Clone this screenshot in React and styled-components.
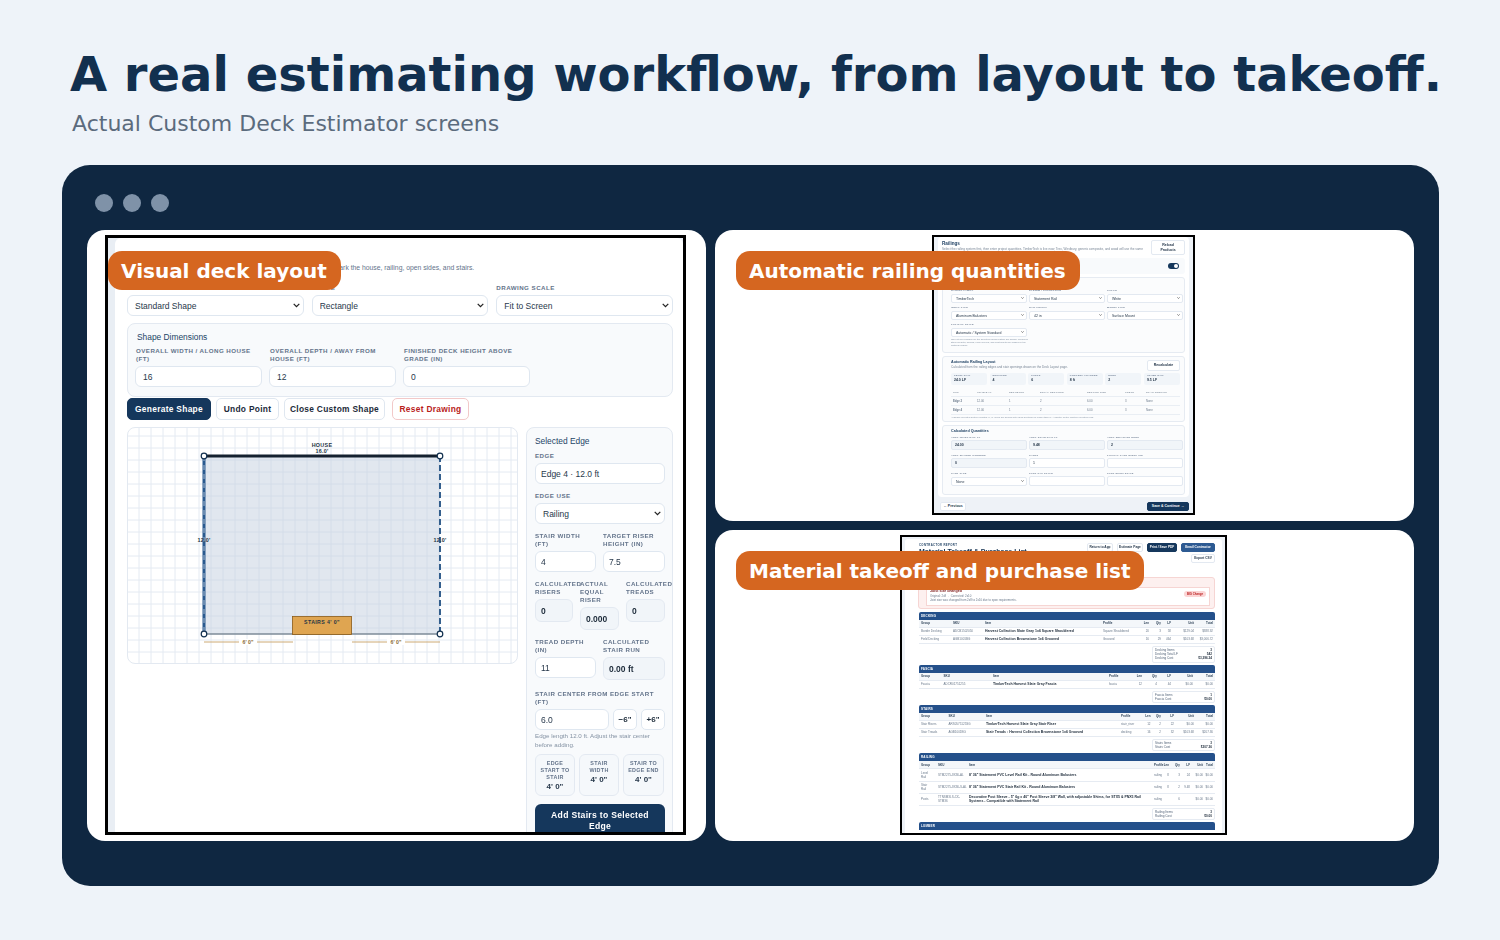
import styled, { createGlobalStyle } from 'styled-components';

const GlobalStyle = createGlobalStyle`
  html, body {
    margin: 0;
    background: #eef3f9;
    font-family: "DejaVu Sans", sans-serif;
  }
`;

const chevron = `url("data:image/svg+xml,%3Csvg xmlns='http://www.w3.org/2000/svg' viewBox='0 0 10 7'%3E%3Cpath d='M1 1.2l4 4 4-4' fill='none' stroke='%23222' stroke-width='1.8'/%3E%3C/svg%3E")`;

/* ---------- deck layout shot ---------- */
const gridLines = (from, to) => {
  const out = [];
  for (let v = from; v < to; v += 12) out.push(v);
  return out;
};

function DeckDrawing() {
  return (
    <svg width="391" height="237" viewBox="0 0 391 237">
      {gridLines(12, 391).map((x) => (
        <line key={x} x1={x} y1="0" x2={x} y2="237" stroke="#e4eaf2" strokeWidth="1" />
      ))}
      {gridLines(9, 237).map((y) => (
        <line key={y} x1="0" y1={y} x2="391" y2={y} stroke="#e4eaf2" strokeWidth="1" />
      ))}
      <rect x="77" y="29" width="236" height="178" fill="#c3d0df" fillOpacity="0.5" />
      <line x1="77" y1="207" x2="313" y2="207" stroke="#7d8b99" strokeWidth="1.4" />
      <line x1="77" y1="29" x2="313" y2="29" stroke="#14202e" strokeWidth="3" />
      <line x1="77" y1="29" x2="77" y2="207" stroke="#2a5a8f" strokeWidth="3" />
      <line x1="77" y1="29" x2="77" y2="207" stroke="#dfe6ee" strokeWidth="0.7" strokeDasharray="5 4" />
      <line x1="313" y1="29" x2="313" y2="207" stroke="#1f4f82" strokeWidth="1.8" strokeDasharray="6 3" />
      <rect x="165.5" y="189.5" width="59" height="18" fill="#dfa551" stroke="#8a5a17" strokeWidth="0.8" />
      <line x1="77" y1="215" x2="166" y2="215" stroke="#cdaa74" strokeWidth="1" />
      <line x1="225" y1="215" x2="313" y2="215" stroke="#cdaa74" strokeWidth="1" />
      <g fontFamily="'Liberation Sans', sans-serif" fontWeight="700" textAnchor="middle" fill="#253545">
        <text x="195" y="20" fontSize="5.4" letterSpacing="0.3">HOUSE</text>
        <text x="195" y="26" fontSize="5.4" letterSpacing="0.2">16.0'</text>
        <text x="77" y="115" fontSize="5.4" letterSpacing="0.2">12.0'</text>
        <text x="313" y="115" fontSize="5.4" letterSpacing="0.2">12.0'</text>
        <text x="195" y="197" fontSize="5.2" letterSpacing="0.4">STAIRS 4' 0"</text>
        <rect x="112" y="212" width="18" height="6" fill="#fff" />
        <rect x="260" y="212" width="18" height="6" fill="#fff" />
        <text x="121" y="217" fontSize="5.2" fill="#8a6a35">6' 0"</text>
        <text x="269" y="217" fontSize="5.2" fill="#8a6a35">6' 0"</text>
      </g>
      {[[77, 29], [313, 29], [77, 207], [313, 207]].map(([cx, cy]) => (
        <circle key={`${cx}-${cy}`} cx={cx} cy={cy} r="2.8" fill="#fff" stroke="#12304f" strokeWidth="1.2" />
      ))}
    </svg>
  );
}

function LayoutScreen() {
  return (
    <LayoutShot>
      <LayoutCard>
        <LayoutTitle>Deck Layout</LayoutTitle>
        <LayoutSub>
          Start from a standard shape or draw an outline, then select edges to mark the house, railing, open sides, and stairs.
        </LayoutSub>
        <SelectRow>
          <Field>
            <FieldLabel>Layout Mode</FieldLabel>
            <BigSelect defaultValue="a"><option value="a">Standard Shape</option></BigSelect>
          </Field>
          <Field>
            <FieldLabel>Shape</FieldLabel>
            <BigSelect defaultValue="a"><option value="a">Rectangle</option></BigSelect>
          </Field>
          <Field>
            <FieldLabel>Drawing Scale</FieldLabel>
            <BigSelect defaultValue="a"><option value="a">Fit to Screen</option></BigSelect>
          </Field>
        </SelectRow>
        <DimPanel>
          <DimTitle>Shape Dimensions</DimTitle>
          <DimGrid>
            <Field>
              <FieldLabel>Overall Width / Along House (FT)</FieldLabel>
              <BigInput>16</BigInput>
            </Field>
            <Field>
              <FieldLabel>Overall Depth / Away From House (FT)</FieldLabel>
              <BigInput>12</BigInput>
            </Field>
            <Field>
              <FieldLabel>Finished Deck Height Above Grade (IN)</FieldLabel>
              <BigInput>0</BigInput>
            </Field>
          </DimGrid>
        </DimPanel>
        <ButtonRow>
          <ActionButton $kind="primary" $w={84}>Generate Shape</ActionButton>
          <ActionButton $w={63}>Undo Point</ActionButton>
          <ActionButton $w={101}>Close Custom Shape</ActionButton>
          <ActionButton $kind="danger" $w={77}>Reset Drawing</ActionButton>
        </ButtonRow>
        <WorkRow>
          <CanvasBox><DeckDrawing /></CanvasBox>
          <SidePanel>
            <SideTitle>Selected Edge</SideTitle>
            <Field>
              <FieldLabel>Edge</FieldLabel>
              <BigInput>Edge 4 · 12.0 ft</BigInput>
            </Field>
            <Field>
              <FieldLabel>Edge Use</FieldLabel>
              <BigSelect defaultValue="a"><option value="a">Railing</option></BigSelect>
            </Field>
            <TwoCol>
              <Field>
                <FieldLabel>Stair Width<br />(FT)</FieldLabel>
                <BigInput>4</BigInput>
              </Field>
              <Field>
                <FieldLabel>Target Riser Height (IN)</FieldLabel>
                <BigInput>7.5</BigInput>
              </Field>
            </TwoCol>
            <ThreeCol>
              <Field>
                <FieldLabel>Calculated Risers</FieldLabel>
                <ReadOut>0</ReadOut>
              </Field>
              <Field>
                <FieldLabel>Actual Equal Riser</FieldLabel>
                <ReadOut>0.000</ReadOut>
              </Field>
              <Field>
                <FieldLabel>Calculated Treads</FieldLabel>
                <ReadOut>0</ReadOut>
              </Field>
            </ThreeCol>
            <TwoCol>
              <Field>
                <FieldLabel>Tread Depth<br />(IN)</FieldLabel>
                <BigInput>11</BigInput>
              </Field>
              <Field>
                <FieldLabel>Calculated Stair Run</FieldLabel>
                <ReadOut>0.00 ft</ReadOut>
              </Field>
            </TwoCol>
            <CenterField>
              <FieldLabel>Stair Center From Edge Start (FT)</FieldLabel>
              <StepRow>
                <BigInput>6.0</BigInput>
                <StepButton>−6"</StepButton>
                <StepButton>+6"</StepButton>
              </StepRow>
              <HelpText>Edge length 12.0 ft. Adjust the stair center before adding.</HelpText>
            </CenterField>
            <SpanRow>
              <SpanCard>
                <SpanLabel>Edge Start to Stair</SpanLabel>
                <SpanValue>4' 0"</SpanValue>
              </SpanCard>
              <SpanCard>
                <SpanLabel>Stair Width</SpanLabel>
                <SpanValue>4' 0"</SpanValue>
              </SpanCard>
              <SpanCard>
                <SpanLabel>Stair to Edge End</SpanLabel>
                <SpanValue>4' 0"</SpanValue>
              </SpanCard>
            </SpanRow>
            <AddButton>Add Stairs to Selected Edge</AddButton>
          </SidePanel>
        </WorkRow>
      </LayoutCard>
    </LayoutShot>
  );
}

/* ---------- railing shot ---------- */
const railStats = [
  ['Level Rail', '24.0 LF'],
  ['Sections', '4'],
  ['Posts', '6'],
  ['Longest Allowed', '8 ft'],
  ['Runs', '2'],
  ['Other Rail', '9.5 LF'],
];

const railRows = [
  ['Edge 2', '12.00', '1', '2', '6.00', '3', 'None'],
  ['Edge 4', '12.00', '1', '2', '6.00', '3', 'None'],
];

function RailField({ label, children }) {
  return (
    <TinyField>
      <TinyLabel>{label}</TinyLabel>
      {children}
    </TinyField>
  );
}

function RailSelect({ value }) {
  return (
    <TinySelect defaultValue={value}>
      <option value={value}>{value}</option>
    </TinySelect>
  );
}

function RailingScreen() {
  return (
    <RailShot>
      <ShotInner>
        <RailCard>
          <RailHead>
            <div>
              <RailTitle>Railings</RailTitle>
              <RailNote>Select the railing system first, then enter project quantities. TimberTech is live now; Trex, Westbury, generic composite, and wood will use the same</RailNote>
            </div>
            <TinyButton $w={34} $h={15} $pad={7}>Reload Products</TinyButton>
          </RailHead>
          <ToggleRow>
            <RailNote>Include railing in this estimate</RailNote>
            <ToggleTrack><ToggleKnob /></ToggleTrack>
          </ToggleRow>
          <RailBox $h={76} $pt={9}>
            <RailGrid $gap={3}>
              <RailField label="Railing Family"><RailSelect value="TimberTech" /></RailField>
              <RailField label="System / Collection"><RailSelect value="Statement Rail" /></RailField>
              <RailField label="Color"><RailSelect value="White" /></RailField>
              <RailField label="Infill Type"><RailSelect value="Aluminum Balusters" /></RailField>
              <RailField label="Rail Height"><RailSelect value="42 in" /></RailField>
              <RailField label="Mount Type"><RailSelect value="Surface Mount" /></RailField>
              <RailField label="Top Rail Style"><RailSelect value="Automatic / System Standard" /></RailField>
            </RailGrid>
            <RailHelp $w={78}>Only styles available for the selected railing system are shown. Required stock rail sets, screws, panel covers, and post inserts are added by the material engine.</RailHelp>
          </RailBox>
          <RailBox $h={66} $pt={3}>
            <RailHead>
              <div>
                <BoxTitle>Automatic Railing Layout</BoxTitle>
                <RailNote>Calculated from the railing edges and stair openings drawn on the Deck Layout page.</RailNote>
              </div>
              <TinyButton $w={33} $h={11}>Recalculate</TinyButton>
            </RailHead>
            <StatRow>
              {railStats.map(([label, value]) => (
                <StatCell key={label}>
                  <TinyLabel>{label}</TinyLabel>
                  <StatValue>{value}</StatValue>
                </StatCell>
              ))}
            </StatRow>
            <RailTableRow $head>
              {['Run', 'Usable LF', 'Segments', 'Equal Sections', 'Section Size', 'Posts', 'Stair Opening'].map((h) => (
                <span key={h}>{h}</span>
              ))}
            </RailTableRow>
            {railRows.map((row) => (
              <RailTableRow key={row[0]}>
                {row.map((c, i) => (i === 0 ? <b key={i}>{c}</b> : <span key={i}>{c}</span>))}
              </RailTableRow>
            ))}
            <RailHelp>Available selected system lengths: 6', 8'. Runs are divided into equal sections no longer than 8'. A shorter center post/no-mounted runs.</RailHelp>
          </RailBox>
          <RailBox $h={70} $pt={3}>
            <BoxTitle>Calculated Quantities</BoxTitle>
            <RailGrid $gap={4}>
              <RailField label="Auto Level Rail LF"><TinyRead>24.00</TinyRead></RailField>
              <RailField label="Auto Stair Rail LF"><TinyRead>9.48</TinyRead></RailField>
              <RailField label="Auto Separate Runs"><TinyRead>2</TinyRead></RailField>
              <RailField label="Auto Shared Corners"><TinyRead>0</TinyRead></RailField>
              <RailField label="Gates"><TinyInput>1</TinyInput></RailField>
              <RailField label="Typical Gate Width (IN)"><TinyInput /></RailField>
              <RailField label="Gate Type"><RailSelect value="None" /></RailField>
              <RailField label="Post Cap Style"><TinyInput /></RailField>
              <RailField label="Post Skirt Style"><TinyInput /></RailField>
            </RailGrid>
          </RailBox>
        </RailCard>
        <RailFooter>
          <TinyButton $w={26} $h={9}>← Previous</TinyButton>
          <TinyButton $kind="primary" $w={42} $h={9}>Save &amp; Continue →</TinyButton>
        </RailFooter>
      </ShotInner>
    </RailShot>
  );
}

/* ---------- takeoff shot ---------- */
const takeoff = [
  {
    name: 'Decking',
    cols: '32px 32px 118px 34px 12px 12px 10px 23px 1fr',
    rows: [
      ['Border Decking', 'ADCB1502050', 'Harvest Collection Slate Gray 1x6 Square Shouldered', 'Square Shouldered', '20', '3', '58', '$129.04', '$388.92'],
      ['Field Decking', 'AGB1001BG', 'Harvest Collection Brownstone 1x6 Grooved', 'Grooved', '16', '29', '464', '$103.68', '$3,006.72'],
    ],
    summary: [['Decking Items', '3'], ['Decking Total LF', '542'], ['Decking Cost', '$3,396.34']],
  },
  {
    name: 'Fascia',
    cols: '22.5px 49.5px 116px 21px 12px 15px 14px 22px 1fr',
    rows: [
      ['Fascia', 'ADCR01751255', 'TimberTech Harvest Slate Gray Fascia', 'fascia', '12', '4', '44', '$0.00', '$0.00'],
    ],
    summary: [['Fascia Items', '1'], ['Fascia Cost', '$0.00']],
  },
  {
    name: 'Stairs',
    cols: '27.5px 37.5px 135px 19.5px 10px 10.5px 13px 20px 1fr',
    rows: [
      ['Stair Risers', 'ARS0575125SG', 'TimberTech Harvest Slate Gray Stair Riser', 'stair_riser', '12', '2', '22', '$0.00', '$0.00'],
      ['Stair Treads', 'AGB1001BG', 'Stair Treads : Harvest Collection Brownstone 1x6 Grooved', 'decking', '16', '2', '32', '$103.68', '$207.36'],
    ],
    summary: [['Stairs Items', '3'], ['Stairs Cost', '$207.36']],
  },
  {
    name: 'Railing',
    cols: '17px 31px 185px 9px 6px 11px 10px 13px 1fr',
    rows: [
      ['Level\nRail', 'STM2275-8X36-AL', '8\' 36" Statement PVC Level Rail Kit - Round Aluminum Balusters', 'railing', '8', '3', '24', '$0.00', '$0.00'],
      ['Stair\nRail', 'STM2275-8X36-S-AL', '8\' 36" Statement PVC Stair Rail Kit - Round Aluminum Balusters', 'railing', '8', '2', '9.48', '$0.00', '$0.00'],
      ['Posts', 'TTNSM3LS-CX-\nSTM36', 'Decorative Post Sleeve - 5" 6g x 40" Post Sleeve 3/8" Wall, with adjustable Shims, for STX5 & PNX5 Rail Systems - Compatible with Statement Rail', 'railing', '', '6', '', '$0.00', '$0.00'],
    ],
    summary: [['Railing Items', '3'], ['Railing Cost', '$0.00']],
  },
];

const takeoffHead = ['Group', 'SKU', 'Item', 'Profile', 'Len', 'Qty', 'LF', 'Unit', 'Total'];

function TakeoffSection({ section }) {
  return (
    <div>
      <SectionBar>{section.name}</SectionBar>
      <SectionRow $cols={section.cols} $head>
        {takeoffHead.map((h, i) => (
          <SectionCell key={h} $right={i > 3}>{h}</SectionCell>
        ))}
      </SectionRow>
      {section.rows.map((row) => (
        <SectionRow key={row[0]} $cols={section.cols}>
          {row.map((c, i) => (
            <SectionCell key={i} $right={i > 3} $item={i === 2}>{c}</SectionCell>
          ))}
        </SectionRow>
      ))}
      <SummaryBox>
        {section.summary.map(([k, v]) => (
          <SummaryLine key={k}>
            <span>{k}</span>
            <b>{v}</b>
          </SummaryLine>
        ))}
      </SummaryBox>
    </div>
  );
}

function TakeoffScreen() {
  return (
    <ReportShot>
      <ShotInner>
        <ReportCard>
          <ReportHead>
            <div>
              <ReportKicker>Contractor Report</ReportKicker>
              <ReportTitle>Material Takeoff &amp; Purchase List</ReportTitle>
            </div>
            <ReportActions>
              <TinyButton $w={26} $h={9}>Return to App</TinyButton>
              <TinyButton $w={26} $h={9}>Estimate Page</TinyButton>
              <TinyButton $kind="primary" $w={30} $h={9}>Print / Save PDF</TinyButton>
              <TinyButton $kind="blue" $w={34} $h={9}>Email Contractor</TinyButton>
              <TinyButton $w={24} $h={9}>Export CSV</TinyButton>
            </ReportActions>
          </ReportHead>
          <AlertBox>
            <AlertTitle>Material Changes</AlertTitle>
            <AlertInner>
              <div>
                <AlertHead>Joist size changed</AlertHead>
                <AlertNote>Original: 2x8 → Corrected: 2x10</AlertNote>
                <AlertNote>Joist size was changed from 2x8 to 2x10 due to span requirements.</AlertNote>
              </div>
              <AlertPill>BIG Change</AlertPill>
            </AlertInner>
          </AlertBox>
          {takeoff.map((s) => (
            <TakeoffSection key={s.name} section={s} />
          ))}
          <SectionBar>Lumber</SectionBar>
        </ReportCard>
      </ShotInner>
    </ReportShot>
  );
}

export default function App() {
  return (
    <Page>
      <GlobalStyle />
      <Heading>A real estimating workflow, from layout to takeoff.</Heading>
      <SubHeading>Actual Custom Deck Estimator screens</SubHeading>
      <BrowserFrame>
        <DotRow>
          <Dot />
          <Dot />
          <Dot />
        </DotRow>
        <PanelGrid>
          <Panel $area="left">
            <Tag>Visual deck layout</Tag>
            <LayoutScreen />
          </Panel>
          <Panel $area="top">
            <Tag>Automatic railing quantities</Tag>
            <RailingScreen />
          </Panel>
          <Panel $area="bottom">
            <Tag>Material takeoff and purchase list</Tag>
            <TakeoffScreen />
          </Panel>
        </PanelGrid>
      </BrowserFrame>
    </Page>
  );
}

/* ---------- page ---------- */
const Page = styled.div`
  width: 1500px;
  height: 940px;
  overflow: hidden;
  padding-top: 43px;
  box-sizing: border-box;
`;

const Heading = styled.h1`
  margin: 0 0 0 70px;
  font-size: 48px;
  line-height: 62px;
  font-weight: 700;
  color: #12304f;
  white-space: nowrap;
`;

const SubHeading = styled.div`
  margin: 5px 0 0 72px;
  font-size: 22px;
  line-height: 28px;
  color: #5b6b7d;
`;

const BrowserFrame = styled.div`
  margin: 27px 61px 0 62px;
  height: 721px;
  box-sizing: border-box;
  padding: 29px 25px 0;
  background: #0f2741;
  border-radius: 28px;
`;

const DotRow = styled.div`
  display: flex;
  gap: 10px;
  margin-left: 8px;
`;

const Dot = styled.span`
  width: 18px;
  height: 18px;
  border-radius: 50%;
  background: #7f92a8;
`;

const PanelGrid = styled.div`
  margin-top: 18px;
  display: grid;
  grid-template-columns: 619px 699px;
  grid-template-rows: 291px 311px;
  gap: 9px;
  grid-template-areas:
    'left top'
    'left bottom';
`;

const Panel = styled.div`
  grid-area: ${(p) => p.$area};
  position: relative;
  background: #fff;
  border-radius: 18px;
  overflow: hidden;
  display: flex;
  justify-content: center;
  align-items: flex-start;
  padding-top: 5px;
`;

const Tag = styled.div`
  position: absolute;
  z-index: 2;
  top: 21px;
  left: 21px;
  height: 39px;
  padding: 0 14px 0 13px;
  display: flex;
  align-items: center;
  background: #d56620;
  border-radius: 14px;
  color: #fff;
  font-size: 20px;
  font-weight: 700;
  white-space: nowrap;
`;

/* ---------- shared shot bits ---------- */
const ShotInner = styled.div`
  height: 100%;
  filter: blur(0.35px);
`;

const Field = styled.div`
  display: flex;
  flex-direction: column;
  justify-content: flex-start;
  min-width: 0;
`;

/* ---------- layout shot ---------- */
const LayoutShot = styled.div`
  width: 581px;
  height: 600px;
  margin-right: 2px;
  box-sizing: border-box;
  border: 3px solid #000;
  background: #e9eef4;
  padding: 0 0 0 7px;
  overflow: hidden;
  font-family: "Liberation Sans", sans-serif;
`;

const LayoutCard = styled.div`
  height: 100%;
  background: #fff;
  border-radius: 6px 6px 0 0;
  padding: 11px 10px 0 12px;
  box-sizing: border-box;
  color: #1f3348;
  filter: blur(0.25px);
`;

const LayoutTitle = styled.div`
  font-size: 12px;
  line-height: 14px;
  font-weight: 700;
  color: #12304f;
`;

const LayoutSub = styled.div`
  font-size: 6.8px;
  line-height: 8px;
  margin-top: 1px;
  color: #64748b;
  white-space: nowrap;
`;

const SelectRow = styled.div`
  display: grid;
  grid-template-columns: repeat(3, 1fr);
  gap: 8px;
  margin-top: 12px;
`;

const FieldLabel = styled.div`
  font-size: 6.2px;
  line-height: 8px;
  font-weight: 700;
  letter-spacing: 0.45px;
  text-transform: uppercase;
  color: #64748b;
  margin-bottom: 3px;
`;

const BigSelect = styled.select`
  appearance: none;
  height: 21px;
  width: 100%;
  box-sizing: border-box;
  padding: 0 12px 0 7px;
  border: 1px solid #dfe7f0;
  border-radius: 6px;
  background: #fff ${chevron} no-repeat right 3px center / 7px 5px;
  font-family: "Liberation Sans", sans-serif;
  font-size: 8.5px;
  color: #27384b;
`;

const BigInput = styled.div`
  height: 21px;
  flex: none;
  box-sizing: border-box;
  padding: 0 7px;
  display: flex;
  align-items: center;
  border: 1px solid #dfe7f0;
  border-radius: 6px;
  background: #fff;
  font-size: 8.5px;
  color: #27384b;
`;

const DimPanel = styled.div`
  margin-top: 7px;
  height: 74px;
  box-sizing: border-box;
  padding: 8px 8px;
  border: 1px solid #e3e9f1;
  border-radius: 8px;
  background: #f8fafc;
`;

const DimTitle = styled.div`
  font-size: 8.4px;
  line-height: 10px;
  color: #234466;
  margin-left: 1px;
`;

const DimGrid = styled.div`
  display: grid;
  grid-template-columns: repeat(3, 127px);
  gap: 7px;
  margin: 5px 0 0 -1px;
  ${FieldLabel} { padding-left: 1px; }
`;

const ButtonRow = styled.div`
  display: flex;
  gap: 5px;
  margin-top: 1px;
`;

const actionColors = {
  primary: 'background:#15375c;color:#fff;border-color:#15375c;',
  danger: 'background:#fff;color:#b91c1c;border-color:#f2c9c9;margin-left:2px;',
  plain: 'background:#fff;color:#1c2a39;border-color:#dfe7f0;',
};

const ActionButton = styled.button`
  width: ${(p) => p.$w}px;
  height: 22px;
  padding: 0;
  border: 1px solid;
  border-radius: 5px;
  font-family: "Liberation Sans", sans-serif;
  font-size: 8.4px;
  font-weight: 700;
  letter-spacing: 0.3px;
  white-space: nowrap;
  ${(p) => actionColors[p.$kind || 'plain']}
`;

const WorkRow = styled.div`
  display: grid;
  grid-template-columns: 391px 147px;
  gap: 8px;
  margin-top: 7px;
  align-items: start;
`;

const CanvasBox = styled.div`
  height: 237px;
  box-sizing: border-box;
  border-radius: 8px;
  overflow: hidden;
  outline: 1px solid #e3e9f1;
  outline-offset: -1px;
  background: #fff;
  svg { display: block; }
`;

const SidePanel = styled.div`
  height: 440px;
  box-sizing: border-box;
  padding: 8px 7px 0 8px;
  border: 1px solid #e3e9f1;
  border-radius: 8px;
  background: #f8fafc;
  display: flex;
  flex-direction: column;
  gap: 8px;
  ${BigInput} { padding: 0 5px; }
`;

const SideTitle = styled.div`
  font-size: 8.4px;
  line-height: 10px;
  color: #234466;
  margin-bottom: -2px;
`;

const TwoCol = styled.div`
  display: grid;
  grid-template-columns: 61px 62px;
  gap: 7px;
`;

const ThreeCol = styled.div`
  display: grid;
  grid-template-columns: 38px 39px 39px;
  gap: 7px;
`;

const CenterField = styled(Field)`
  margin-top: 2px;
`;

const ReadOut = styled.div`
  height: 23px;
  box-sizing: border-box;
  padding: 0 5px;
  display: flex;
  align-items: center;
  border: 1px solid #e3e9f1;
  border-radius: 6px;
  background: #f1f5f9;
  font-size: 8.5px;
  font-weight: 700;
  color: #1c2a39;
`;

const StepRow = styled.div`
  display: flex;
  gap: 4px;
  ${BigInput} { flex: 1 1 auto; }
`;

const StepButton = styled.button`
  width: 24px;
  height: 21px;
  flex: none;
  padding: 0;
  border: 1px solid #dfe7f0;
  border-radius: 5px;
  background: #fff;
  font-family: "Liberation Sans", sans-serif;
  font-size: 8px;
  font-weight: 700;
  color: #1c2a39;
`;

const HelpText = styled.div`
  margin-top: 1px;
  font-size: 6.2px;
  line-height: 9px;
  color: #8492a3;
`;

const SpanRow = styled.div`
  display: grid;
  grid-template-columns: 40px 40px 41px;
  gap: 4px;
  margin-top: -3px;
`;

const SpanCard = styled.div`
  height: 42px;
  box-sizing: border-box;
  padding: 5px 2px 0;
  text-align: center;
  border: 1px solid #e3e9f1;
  border-radius: 6px;
  background: #f5f8fb;
`;

const SpanLabel = styled.div`
  font-size: 5.4px;
  line-height: 7px;
  font-weight: 700;
  letter-spacing: 0.3px;
  text-transform: uppercase;
  color: #64748b;
`;

const SpanValue = styled.div`
  font-size: 8px;
  line-height: 11px;
  font-weight: 700;
  color: #27384b;
`;

const AddButton = styled.button`
  height: 34px;
  padding: 0 10px;
  border: 0;
  border-radius: 6px;
  background: #15375c;
  font-family: "Liberation Sans", sans-serif;
  font-size: 8.6px;
  line-height: 11px;
  font-weight: 700;
  letter-spacing: 0.3px;
  color: #fff;
`;

/* ---------- railing shot ---------- */
const RailShot = styled.div`
  width: 263px;
  height: 280px;
  margin-right: 2px;
  box-sizing: border-box;
  border: 2px solid #000;
  background: #eef2f7;
  overflow: hidden;
  font-family: "Liberation Sans", sans-serif;
`;

const RailCard = styled.div`
  margin: 0 4px;
  height: 260px;
  box-sizing: border-box;
  padding: 3px 4px 0;
  background: #fff;
  border-radius: 4px;
`;

const RailHead = styled.div`
  display: flex;
  justify-content: space-between;
  align-items: flex-start;
`;

const RailTitle = styled.div`
  font-size: 4.6px;
  line-height: 6px;
  font-weight: 700;
  color: #234466;
  margin-top: 1px;
`;

const RailNote = styled.div`
  font-size: 3.1px;
  line-height: 4px;
  color: #7a8797;
  white-space: nowrap;
`;

const tinyColors = {
  primary: 'background:#15375c;color:#fff;border-color:#15375c;',
  blue: 'background:#2d5a92;color:#fff;border-color:#2d5a92;',
  plain: 'background:#fff;color:#24364a;border-color:#e3e9f1;',
};

const TinyButton = styled.div`
  width: ${(p) => p.$w}px;
  height: ${(p) => p.$h}px;
  flex: none;
  box-sizing: border-box;
  padding: 0 ${(p) => p.$pad || 0}px;
  display: flex;
  align-items: center;
  justify-content: center;
  text-align: center;
  border: 0.5px solid;
  border-radius: 2px;
  font-size: 3.5px;
  line-height: 5px;
  font-weight: 700;
  white-space: ${(p) => (p.$pad ? 'normal' : 'nowrap')};
  ${(p) => tinyColors[p.$kind || 'plain']}
`;

const ToggleRow = styled.div`
  margin-top: 3px;
  height: 16px;
  box-sizing: border-box;
  padding: 0 6px 0 8px;
  display: flex;
  align-items: center;
  justify-content: space-between;
  background: #f8fafc;
  border-radius: 3px;
`;

const ToggleTrack = styled.span`
  position: relative;
  width: 11px;
  height: 6px;
  border-radius: 3px;
  background: #15375c;
`;

const ToggleKnob = styled.span`
  position: absolute;
  top: 1px;
  right: 1px;
  width: 4px;
  height: 4px;
  border-radius: 50%;
  background: #fff;
`;

const RailBox = styled.div`
  margin-top: 3px;
  height: ${(p) => p.$h}px;
  box-sizing: border-box;
  padding: ${(p) => p.$pt}px 4px 0 8px;
  border: 0.5px solid #e6ebf2;
  border-radius: 3px;
  background: #fbfcfd;
  overflow: hidden;
`;

const BoxTitle = styled.div`
  font-size: 3.7px;
  line-height: 5px;
  font-weight: 700;
  color: #234466;
`;

const RailGrid = styled.div`
  display: grid;
  grid-template-columns: repeat(3, 76px);
  gap: ${(p) => p.$gap}px 2px;
  margin-top: 2px;
`;

const TinyField = styled.div`
  min-width: 0;
`;

const TinyLabel = styled.div`
  font-size: 2.4px;
  line-height: 4px;
  font-weight: 700;
  letter-spacing: 0.25px;
  text-transform: uppercase;
  color: #64748b;
  white-space: nowrap;
`;

const TinySelect = styled.select`
  appearance: none;
  display: block;
  width: 100%;
  height: 9px;
  margin-top: 1px;
  box-sizing: border-box;
  padding: 0 5px 0 4px;
  border: 0.5px solid #e3e9f1;
  border-radius: 2px;
  background: #fff ${chevron} no-repeat right 1.5px center / 3.4px 2.4px;
  font-family: "Liberation Sans", sans-serif;
  font-size: 3.5px;
  color: #27384b;
`;

const TinyInput = styled.div`
  height: 10px;
  box-sizing: border-box;
  padding: 0 3px;
  display: flex;
  align-items: center;
  border: 0.5px solid #e3e9f1;
  border-radius: 2px;
  background: #fff;
  font-size: 3.5px;
  color: #27384b;
`;

const TinyRead = styled(TinyInput)`
  background: #f1f5f9;
  font-weight: 700;
`;

const RailHelp = styled.div`
  margin-top: 1px;
  width: ${(p) => (p.$w ? `${p.$w}px` : 'auto')};
  font-size: 2.4px;
  line-height: 3px;
  color: #8492a3;
`;

const StatRow = styled.div`
  display: grid;
  grid-template-columns: repeat(6, 1fr);
  gap: 2.5px;
  margin: 2px 0 3px;
`;

const StatCell = styled.div`
  height: 12px;
  box-sizing: border-box;
  padding: 1px 3px 0;
  background: #f1f5f9;
  border-radius: 2px;
`;

const StatValue = styled.div`
  font-size: 3.5px;
  line-height: 5px;
  font-weight: 700;
  color: #27384b;
`;

const RailTableRow = styled.div`
  display: grid;
  grid-template-columns: 24px 32px 31px 47px 38px 21px 1fr;
  height: 8px;
  align-items: center;
  padding: 0 2px;
  font-size: ${(p) => (p.$head ? '2.4px' : '2.8px')};
  letter-spacing: ${(p) => (p.$head ? '0.2px' : '0')};
  text-transform: ${(p) => (p.$head ? 'uppercase' : 'none')};
  color: #6b7a8c;
  border-bottom: 0.5px solid #e9eef4;
`;

const RailFooter = styled.div`
  margin: 5px 4px 0 6px;
  display: flex;
  justify-content: space-between;
`;

/* ---------- takeoff shot ---------- */
const ReportShot = styled.div`
  width: 327px;
  height: 300px;
  margin-right: 2px;
  box-sizing: border-box;
  border: 2px solid #000;
  background: #eef2f7;
  overflow: hidden;
  font-family: "Liberation Sans", sans-serif;
`;

const ReportCard = styled.div`
  margin: 2px 3px 0;
  min-height: 100%;
  box-sizing: border-box;
  padding: 4px 7px 0 14px;
  background: #fff;
  border-radius: 3px;
`;

const ReportHead = styled.div`
  display: flex;
  justify-content: space-between;
  align-items: flex-start;
  height: 34px;
`;

const ReportKicker = styled.div`
  font-size: 2.8px;
  line-height: 4px;
  font-weight: 700;
  letter-spacing: 0.35px;
  text-transform: uppercase;
  color: #234466;
`;

const ReportTitle = styled.div`
  font-size: 7px;
  line-height: 9px;
  font-weight: 700;
  color: #12304f;
`;

const ReportActions = styled.div`
  width: 132px;
  display: flex;
  flex-wrap: wrap;
  justify-content: flex-end;
  gap: 2px 4px;
  ${TinyButton} { font-size: 3.2px; }
`;

const AlertBox = styled.div`
  height: 32px;
  box-sizing: border-box;
  padding: 2px 4px 0 7px;
  background: #fdf0ef;
  border: 0.5px solid #f6d5d3;
  border-radius: 3px;
  margin: 0 0 3px -1px;
`;

const AlertTitle = styled.div`
  font-size: 3.4px;
  line-height: 5px;
  font-weight: 700;
  color: #b91c1c;
`;

const AlertInner = styled.div`
  margin-top: 2px;
  height: 19px;
  box-sizing: border-box;
  padding: 1px 3px;
  display: flex;
  justify-content: space-between;
  background: #fff;
  border: 0.5px solid #f6d5d3;
`;

const AlertHead = styled.div`
  font-size: 3.6px;
  line-height: 5px;
  font-weight: 700;
  color: #7f1d1d;
`;

const AlertNote = styled.div`
  font-size: 2.9px;
  line-height: 4px;
  color: #6b7a8c;
`;

const AlertPill = styled.span`
  align-self: flex-start;
  margin-top: 2px;
  padding: 1px 3px;
  border-radius: 3px;
  background: #fbd5d5;
  font-size: 2.8px;
  font-weight: 700;
  color: #b91c1c;
`;

const SectionBar = styled.div`
  height: 8px;
  display: flex;
  align-items: center;
  padding: 0 2px;
  background: #24508a;
  border-radius: 2px 2px 0 0;
  font-size: 3px;
  font-weight: 700;
  letter-spacing: 0.2px;
  text-transform: uppercase;
  color: #fff;
  margin-top: 2px;
`;

const SectionRow = styled.div`
  display: grid;
  grid-template-columns: ${(p) => p.$cols};
  min-height: 8px;
  box-sizing: border-box;
  align-items: center;
  padding: 0 2px;
  background: ${(p) => (p.$head ? '#f4f7fa' : '#fff')};
  border-bottom: 0.5px solid #e6ebf2;
  font-size: 3px;
  font-weight: ${(p) => (p.$head ? 700 : 400)};
  color: ${(p) => (p.$head ? '#33475c' : '#6b7a8c')};
`;

const SectionCell = styled.span`
  text-align: ${(p) => (p.$right ? 'right' : 'left')};
  font-weight: ${(p) => (p.$item ? 700 : 'inherit')};
  font-size: ${(p) => (p.$item ? '3.5px' : 'inherit')};
  color: ${(p) => (p.$item ? '#1c2a39' : 'inherit')};
  line-height: 4.4px;
  padding: 1.2px 0;
  white-space: pre-line;
  min-width: 0;
`;

const SummaryBox = styled.div`
  margin: 2px 0 0 auto;
  width: 63px;
  box-sizing: border-box;
  padding: 1px 2px;
  border: 0.5px solid #e6ebf2;
  border-radius: 2px;
`;

const SummaryLine = styled.div`
  display: flex;
  justify-content: space-between;
  font-size: 3.1px;
  line-height: 4.2px;
  color: #55657a;
  b { color: #1c2a39; }
`;
